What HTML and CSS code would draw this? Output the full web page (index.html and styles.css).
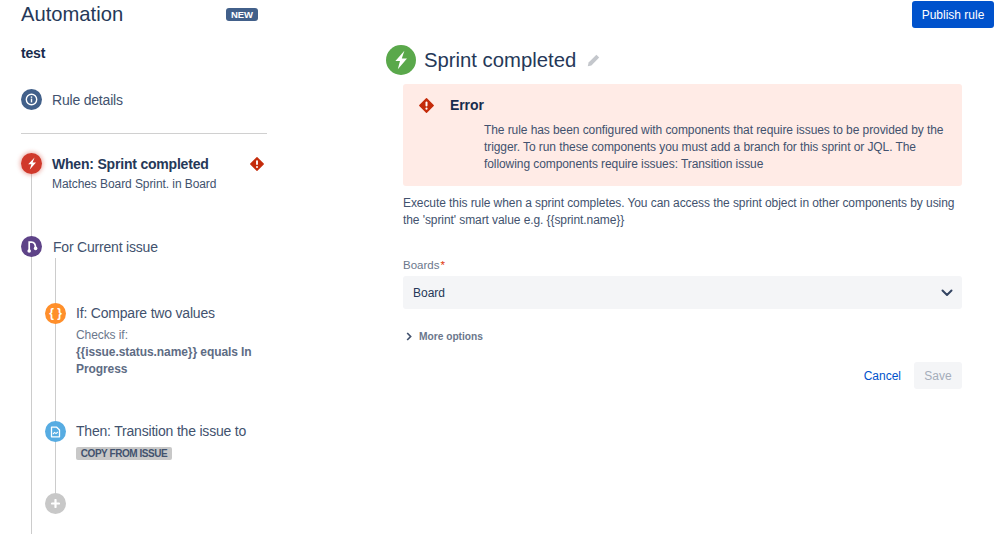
FILE: index.html
```html
<!DOCTYPE html>
<html lang="en">
<head>
<meta charset="utf-8">
<title>Automation</title>
<link rel="stylesheet" href="styles.css">
</head>
<body>
<div class="page">
  <aside class="sidebar">
    <div class="brand">
      <h1 class="brand-title">Automation</h1>
      <span class="new-badge">NEW</span>
    </div>
    <div class="rule-name">test</div>
    <div class="details">
      <span class="dot dot-blue">
        <svg width="13" height="13" viewBox="0 0 13 13"><circle cx="6.5" cy="6.5" r="5.2" fill="none" stroke="#fff" stroke-width="1.4"/><rect x="5.8" y="5.6" width="1.4" height="3.8" fill="#fff"/><rect x="5.8" y="3.4" width="1.4" height="1.4" fill="#fff"/></svg>
      </span>
      <span class="details-label">Rule details</span>
    </div>
    <div class="divider"></div>
    <div class="rail">
      <div class="when">
        <span class="dot dot-red">
          <svg width="10" height="13" viewBox="0 0 10 13"><path d="M7.6 0.4 1.2 7.2h3.2L2.8 12.6 9 5.4H5.6z" fill="#fff"/></svg>
        </span>
        <div class="when-body">
          <div class="when-head">
            <span class="when-title">When: Sprint completed</span>
            <svg width="14" height="14" viewBox="0 0 15 15"><path d="M7.5 0.8 14.2 7.5 7.5 14.2 0.8 7.5z" fill="#c42b0a" stroke="#c42b0a" stroke-width="1.4" stroke-linejoin="round"/><rect x="6.5" y="3.4" width="2" height="5.2" rx="1" fill="#fff"/><circle cx="7.5" cy="10.7" r="1.1" fill="#fff"/></svg>
          </div>
          <div class="when-sub">Matches Board Sprint. in Board</div>
        </div>
      </div>
      <div class="branch">
        <span class="dot dot-purple">
          <svg width="12" height="13" viewBox="0 0 12 13"><circle cx="3.2" cy="11" r="1.8" fill="#fff"/><circle cx="9.6" cy="8.4" r="1.8" fill="#fff"/><path d="M3.2 11V2.2H5.4C7.8 2.2 9.6 4.6 9.6 8.4" stroke="#fff" stroke-width="1.7" fill="none"/></svg>
        </span>
        <span class="branch-label">For Current issue</span>
      </div>
      <div class="nested">
        <div class="step step-if">
          <span class="dot dot-orange"><span class="braces">{ }</span></span>
          <div class="step-body">
            <div class="step-title">If: Compare two values</div>
            <div class="step-note">Checks if:</div>
            <div class="step-strong">{{issue.status.name}} equals In Progress</div>
          </div>
        </div>
        <div class="step step-then">
          <span class="dot dot-sky">
            <svg width="11" height="12" viewBox="0 0 11 12"><path d="M1.5 1.2h5.2l2.8 2.8v6.8h-8z" fill="none" stroke="#fff" stroke-width="1.3" stroke-linejoin="round"/><path d="M3 8 4.6 6.4 6 7.6 7.8 6" fill="none" stroke="#fff" stroke-width="1.1"/></svg>
          </span>
          <div class="step-body">
            <div class="step-title">Then: Transition the issue to</div>
            <span class="tag">COPY FROM ISSUE</span>
          </div>
        </div>
        <div class="step step-add">
          <span class="dot dot-grey">
            <svg width="9" height="9" viewBox="0 0 9 9"><path d="M4.5 1v7M1 4.5h7" stroke="#fff" stroke-width="2.2" stroke-linecap="round"/></svg>
          </span>
        </div>
      </div>
    </div>
  </aside>

  <main class="main">
    <div class="publish-row">
      <button class="btn-publish" type="button">Publish rule</button>
    </div>
    <div class="heading">
      <span class="dot-large">
        <svg width="16" height="20" viewBox="0 0 16 20"><path d="M11.4 0.8 2.4 11h4.6L4.8 19.2 14 8.4H8.8z" fill="#fff"/></svg>
      </span>
      <h2 class="heading-title">Sprint completed</h2>
      <svg class="pencil" width="13" height="13" viewBox="0 0 13 13"><path d="M9.4 0.8 12.2 3.6 4.4 11.4 0.8 12.2 1.6 8.6z" fill="#c4c7cc"/></svg>
    </div>
    <div class="panel">
      <section class="alert">
        <div class="alert-head">
          <svg width="15" height="15" viewBox="0 0 15 15"><path d="M7.5 0.8 14.2 7.5 7.5 14.2 0.8 7.5z" fill="#c42b0a" stroke="#c42b0a" stroke-width="1.4" stroke-linejoin="round"/><rect x="6.5" y="3.4" width="2" height="5.2" rx="1" fill="#fff"/><circle cx="7.5" cy="10.7" r="1.1" fill="#fff"/></svg>
          <span class="alert-title">Error</span>
        </div>
        <p class="alert-text">The rule has been configured with components that require issues to be provided by the trigger. To run these components you must add a branch for this sprint or JQL. The following components require issues: Transition issue</p>
      </section>
      <p class="desc">Execute this rule when a sprint completes. You can access the sprint object in other components by using the 'sprint' smart value e.g. {{sprint.name}}</p>
      <div class="field-label">Boards<span class="req">*</span></div>
      <div class="select">
        <span>Board</span>
        <svg width="12" height="8" viewBox="0 0 12 8"><path d="M1.5 1.5 6 6 10.5 1.5" fill="none" stroke="#344563" stroke-width="2" stroke-linecap="round" stroke-linejoin="round"/></svg>
      </div>
      <div class="more">
        <svg width="6" height="9" viewBox="0 0 6 9"><path d="M1.2 1 4.6 4.5 1.2 8" fill="none" stroke="#42526e" stroke-width="1.7"/></svg>
        <span>More options</span>
      </div>
      <div class="actions">
        <a class="cancel" href="#">Cancel</a>
        <button class="btn-save" type="button">Save</button>
      </div>
    </div>
  </main>
</div>
</body>
</html>
```
FILE: styles.css
```css
* { box-sizing: border-box; }
html, body { margin: 0; height: 100%; overflow: hidden; background: #fff; }
body { font-family: "Liberation Sans", Arial, sans-serif; color: #172b4d; }
.page { display: flex; height: 534px; }

.sidebar { width: 386px; flex: none; padding-left: 21px; }
.brand { width: 237px; height: 28px; display: flex; align-items: center; justify-content: space-between; }
.brand-title { margin: 0; font-size: 20.2px; font-weight: 400; color: #253858; line-height: 28px; }
.new-badge { width: 32px; height: 13px; margin-top: 1px; border-radius: 3px; background: #42608a; color: #fff; font-size: 9.5px; font-weight: 700; line-height: 13px; text-align: center; }
.rule-name { margin-top: 17px; font-size: 14px; font-weight: 700; line-height: 16px; color: #172b4d; letter-spacing: -0.2px; }

.dot { width: 21px; height: 21px; flex: none; border-radius: 50%; display: flex; align-items: center; justify-content: center; }
.dot-blue { background: #42608a; }
.dot-red { background: #d0392b; box-shadow: 0 0 4px 1px rgba(208, 57, 43, .4); }
.dot-purple { background: #5e4388; }
.dot-orange { background: #ff8f2b; }
.dot-sky { background: #57ace2; }
.dot-grey { background: #c8c8c8; }
.braces { color: #fff; font-size: 12px; font-weight: 700; line-height: 21px; }

.details { display: flex; align-items: center; gap: 10px; margin-top: 28px; height: 21px; }
.details-label { font-size: 14px; color: #42526e; letter-spacing: -0.2px; }
.divider { width: 246px; height: 1px; margin-top: 23px; background: #d0d0d0; }

.rail { margin: 19px 0 0 10px; height: 381px; border-left: 1px solid #ccc; }
.when { display: flex; gap: 10px; margin-left: -11px; }
.when-body { width: 212px; }
.when-head { display: flex; justify-content: space-between; align-items: center; height: 21px; }
.when-title { font-size: 14px; font-weight: 700; color: #253858; letter-spacing: -0.2px; }
.when-sub { margin-top: 2px; font-size: 12px; line-height: 16px; color: #42526e; letter-spacing: -0.08px; }

.branch { display: flex; align-items: center; gap: 11px; margin: 44px 0 0 -11px; height: 21px; }
.branch-label { font-size: 14px; color: #42526e; letter-spacing: -0.2px; }
.nested { margin: 1px 0 0 23px; height: 245px; border-left: 1px solid #ccc; padding-top: 45px; }
.step { display: flex; gap: 10px; margin-left: -11px; }
.step-body { width: 180px; }
.step-title { font-size: 14px; line-height: 21px; color: #42526e; white-space: nowrap; letter-spacing: -0.2px; }
.step-note { margin-top: 3px; font-size: 12px; line-height: 17px; color: #6b778c; letter-spacing: -0.08px; }
.step-strong { font-size: 12px; font-weight: 700; line-height: 17px; color: #5e6c84; letter-spacing: -0.08px; }
.step-then { margin-top: 43px; }
.tag { display: block; width: 96px; margin-top: 5px; height: 13px; border-radius: 2px; background: #c8c8c8; color: #42526e; font-size: 10px; font-weight: 700; line-height: 13px; text-align: center; letter-spacing: -0.45px; }
.step-add { margin-top: 33px; }

.main { flex: 1; min-width: 0; padding-right: 5px; }
.publish-row { display: flex; justify-content: flex-end; padding-top: 1px; height: 45px; }
.btn-publish { width: 82px; height: 27px; padding: 0; border: 0; border-radius: 3px; background: #0052cc; color: #fff; font: 400 12px "Liberation Sans", Arial, sans-serif; }
.heading { display: flex; align-items: center; height: 30px; }
.dot-large { width: 30px; height: 30px; flex: none; border-radius: 50%; background: #5aa84b; display: flex; align-items: center; justify-content: center; }
.heading-title { margin: 0 0 0 8px; font-size: 20.3px; font-weight: 400; line-height: 30px; color: #253858; }
.pencil { margin-left: 11px; }

.panel { margin: 9px 32px 0 17px; }
.alert { height: 102px; padding: 13px 17px 0 16px; background: #ffebe6; border-radius: 3px; }
.alert-head { display: flex; align-items: center; gap: 16px; height: 16px; }
.alert-title { font-size: 14px; font-weight: 700; color: #172b4d; letter-spacing: -0.1px; }
.alert-text { margin: 9px 0 0 65px; font-size: 12px; line-height: 17px; color: #42526e; letter-spacing: -0.08px; }
.desc { margin: 9px 0 0; font-size: 12px; line-height: 17px; color: #42526e; letter-spacing: -0.08px; }

.field-label { margin-top: 29px; font-size: 11.5px; line-height: 14px; color: #6b778c; }
.req { color: #de350b; margin-left: 1px; }
.select { display: flex; align-items: center; justify-content: space-between; height: 33px; margin-top: 4px; padding: 0 9px 0 10px; background: #f4f5f7; border-radius: 3px; font-size: 12px; color: #253858; }
.more { display: flex; align-items: center; gap: 7px; height: 14px; margin-top: 20px; padding-left: 3px; font-size: 10.2px; font-weight: 700; color: #6b778c; }

.actions { display: flex; justify-content: flex-end; align-items: center; gap: 13px; margin-top: 19px; }
.cancel { font-size: 12px; color: #0052cc; text-decoration: none; }
.btn-save { width: 48px; height: 27px; padding: 0; border: 0; border-radius: 3px; background: #f4f5f7; color: #a5adba; font: 400 12px "Liberation Sans", Arial, sans-serif; }
```
